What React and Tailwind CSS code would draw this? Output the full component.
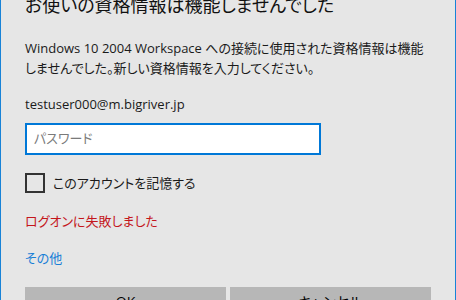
import React from 'react';

export default function App() {
  return (
    <div className="h-[300px] w-[456px] overflow-hidden bg-[#e6e6e6] border-x border-[#1883d7] px-6 font-['Open_Sans','Noto_Sans_CJK_JP',sans-serif] [font-feature-settings:'palt'] text-black">
      {/* Title, scrolled partly out of view */}
      <h1 className="-mt-[7px] text-[18px] leading-[24px] font-normal text-[#111]">
        お使いの資格情報は機能しませんでした
      </h1>

      <p className="mt-[21px] whitespace-nowrap text-[13px] leading-[20px] text-[#1a1a1a]">
        Windows 10 2004 Workspace への接続に使用された資格情報は機能
        <br />
        しませんでした。新しい資格情報を入力してください。
      </p>

      <div className="mt-[16px] text-[13px] leading-[20px] text-[#1a1a1a]">testuser000@m.bigriver.jp</div>

      <div className="mt-[9px] flex h-[32px] w-[296px] items-center border-2 border-[#0078d7] bg-white pl-[7px]">
        <span className="text-[13px] text-[#7a7a7a]">パスワード</span>
      </div>

      <label className="mt-[18px] flex items-center gap-2">
        <span className="h-5 w-5 border-2 border-[#333]" />
        <span className="text-[13px] leading-[20px] text-[#1a1a1a]">このアカウントを記憶する</span>
      </label>

      <div className="mt-[18px] text-[13px] leading-[20px] text-[#c4161c]">ログオンに失敗しました</div>

      <div className="mt-[17px] text-[13px] leading-[20px] text-[#1a7fd6]">その他</div>

      <div className="mt-[19px] grid grid-cols-2 gap-1">
        <button className="h-[32px] bg-[#b7b7b7] pb-[4px] text-[14px] text-black">OK</button>
        <button className="h-[32px] bg-[#b7b7b7] pb-[4px] text-[14px] text-black">キャンセル</button>
      </div>
    </div>
  );
}
